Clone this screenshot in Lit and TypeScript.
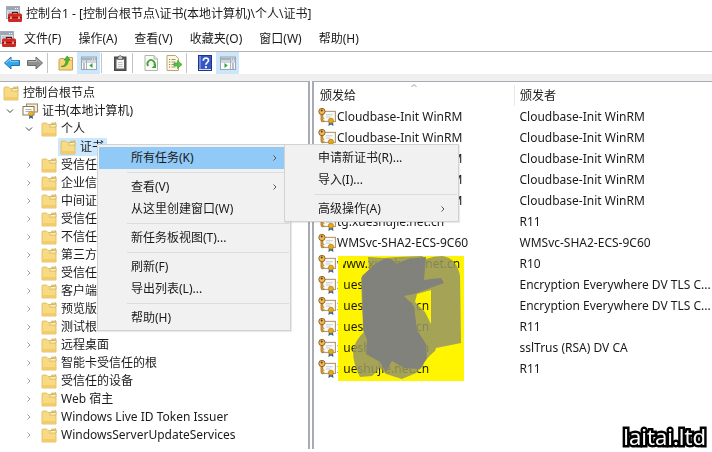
import { LitElement, html, css, svg, nothing } from "lit";
import { customElement, property } from "lit/decorators.js";

interface TreeNode {
  label: string;
  depth: number;
  icon?: string;
  arrow?: "open" | "closed";
  selected?: boolean;
}

interface MenuEntry {
  label?: string;
  sub?: boolean;
  active?: boolean;
}

const TREE: TreeNode[] = [
  { label: "控制台根节点", depth: 0 },
  { label: "证书(本地计算机)", depth: 1, arrow: "open", icon: "store" },
  { label: "个人", depth: 2, arrow: "open" },
  { label: "证书", depth: 3, selected: true },
  ...[
    "受信任",
    "企业信",
    "中间证",
    "受信任",
    "不信任",
    "第三方",
    "受信任",
    "客户端",
    "预览版",
    "测试根",
    "远程桌面",
    "智能卡受信任的根",
    "受信任的设备",
    "Web 宿主",
    "Windows Live ID Token Issuer",
    "WindowsServerUpdateServices",
  ].map((label): TreeNode => ({ label, depth: 2, arrow: "closed" })),
];

const CLOUD = "Cloudbase-Init WinRM";
const SITE = "xueshujie.net.cn";
const CERTS: [string, string][] = [
  [CLOUD, CLOUD],
  [CLOUD, CLOUD],
  [CLOUD, CLOUD],
  [CLOUD, CLOUD],
  [CLOUD, CLOUD],
  ["tg." + SITE, "R11"],
  ["WMSvc-SHA2-ECS-9C60", "WMSvc-SHA2-ECS-9C60"],
  ["www." + SITE, "R10"],
  [SITE, "Encryption Everywhere DV TLS C..."],
  [SITE, "Encryption Everywhere DV TLS C..."],
  [SITE, "R11"],
  [SITE, "sslTrus (RSA) DV CA"],
  [SITE, "R11"],
];

const CONTEXT: MenuEntry[] = [
  { label: "所有任务(K)", sub: true, active: true },
  {},
  { label: "查看(V)", sub: true },
  { label: "从这里创建窗口(W)" },
  {},
  { label: "新任务板视图(T)..." },
  {},
  { label: "刷新(F)" },
  { label: "导出列表(L)..." },
  {},
  { label: "帮助(H)" },
];

const TASKS: MenuEntry[] = [
  { label: "申请新证书(R)..." },
  { label: "导入(I)..." },
  {},
  { label: "高级操作(A)", sub: true },
];

const ICONS: Record<string, unknown> = {
  console: svg`
    <rect x="0.5" y="0.5" width="13" height="12" fill="#d9dfe6" stroke="#a3acb8"/>
    <rect x="1" y="1" width="12" height="3" fill="#9aa6b4"/>
    <path d="M9 2.5h1M11 2.5h1" stroke="#fff"/>
    <path d="M2 6h4M2 8h3" stroke="#a9b3bf"/>
    <path d="M6.5 8V6.3h5V8" fill="none" stroke="#5d1410" stroke-width="1.2"/>
    <rect x="2" y="7.500" width="14" height="8.500" rx="1.500" fill="#cf2a22"/>
    <path d="M2 11.500h14" stroke="#8e1612"/>
    <path d="M5 10.500v2.500M13 10.500v2.500" stroke="#f1e9e4" stroke-width="1.300"/>`,
  folder: svg`
    <path d="M1 3.500L1.500 2h4l1.500 1.500h8V15H1z" fill="#f8da83" stroke="#d9b75c" stroke-width="0.800"/>
    <path d="M8.500 5.500L10 3.500h3l1-1.700h1V6H8.500z" fill="#fdf2c4" stroke="#cfae58" stroke-width="0.700"/>
    <path d="M10.500 2h4v1.500h-4z" fill="#f0d080" stroke="#c9a750" stroke-width="0.600"/>
    <path d="M1.500 12h13v2.600h-13z" fill="#f3cb68"/>`,
  store: svg`
    <rect x="4.500" y="1" width="11" height="8" fill="#f3ede2" stroke="#a08860"/>
    <rect x="1" y="3.500" width="11" height="8.500" fill="#fff" stroke="#8d744e"/>
    <path d="M3.500 6.500h6M3.500 8.500h4" stroke="#9fb0d0"/>
    <path d="M7.500 11l-.5 5 2-1.300 2 1.300-.5-5z" fill="#2e5f9e"/>
    <circle cx="9" cy="10.500" r="2.400" fill="#eab52e" stroke="#b27d10" stroke-width="0.600"/>`,
  cert: svg`
    <rect x="3.500" y="3" width="12" height="9" fill="#fbfaf5" stroke="#b39a78"/>
    <path d="M7 6h6M7 8h4" stroke="#b9c3d4" stroke-width="0.800"/>
    <path d="M9.800 12l-.6 4 2.300-1.300 2.200 1.300-.4-4z" fill="#2f5c9c"/>
    <circle cx="11.500" cy="11.300" r="2.300" fill="#e5a71f" stroke="#ad780f" stroke-width="0.600"/>
    <path d="M2.600 5v6.200l1.400 1.300 1.300-1.300-1-1 1-1-1-1V5z" fill="#dc9f35" stroke="#8a5a18" stroke-width="0.500"/>
    <circle cx="3.500" cy="3.100" r="2.800" fill="#efb95a" stroke="#8a5a18" stroke-width="0.800"/>
    <circle cx="3.300" cy="2.300" r="0.900" fill="#5c3b10"/>`,
  back: svg`<path d="M0.500 8L7 2v3.500h8.500v5H7V14z" fill="#35a6e8" stroke="#1c73b4"/><path d="M2 7.800L6.300 4v2.300h8" fill="none" stroke="#93d3f7"/>`,
  forward: svg`<path d="M15.500 8L9 2v3.500H0.500v5H9V14z" fill="#909090" stroke="#6b6b6b"/><path d="M1.500 6.500h8V4.200L13.500 8" fill="none" stroke="#b9b9b9"/>`,
  up: svg`
    <path d="M1 5l1-1.500h4L7 5h7.500v10H1z" fill="#f5d67b" stroke="#c9a24a"/>
    <path d="M14.500 5V2.500h-4V5" fill="#fbe8a8" stroke="#c9a24a"/>
    <path d="M3 11.500c3.500-.5 5-3 5-6.500H6l3.200-4L12 5h-1.700c0 4.500-2.500 7.500-7.300 6.500z" fill="#52b82c" stroke="#2f8a18" stroke-width="0.600"/>`,
  paneLeft: svg`
    <rect x="0.500" y="2" width="15" height="12.500" fill="#f8fafb" stroke="#9aa6b2"/>
    <path d="M1 2.500h14v3H1z" fill="#a6b2bf"/><path d="M11 4h1M13 4h1" stroke="#fff"/>
    <path d="M5.500 5v9M1 7h14" stroke="#a6b2bf"/><path d="M2 9h2M2 11h2M2 13h2" stroke="#76869a"/>
    <path d="M11.500 8v5L8.300 10.500z" fill="#35a52c"/>`,
  paneRight: svg`
    <rect x="0.500" y="2" width="15" height="12.500" fill="#f8fafb" stroke="#9aa6b2"/>
    <path d="M1 2.500h14v3H1z" fill="#a6b2bf"/><path d="M11 4h1M13 4h1" stroke="#fff"/>
    <path d="M10.500 5v9M1 7h14" stroke="#a6b2bf"/><path d="M12 9h2M12 11h2M12 13h2" stroke="#76869a"/>
    <path d="M4.500 8v5l3.200-2.500z" fill="#35a52c"/>`,
  clipboard: svg`
    <rect x="2.500" y="2" width="11.500" height="13.500" fill="#5d5d5d" stroke="#474747"/>
    <rect x="4.500" y="4.500" width="7.500" height="9" fill="#f7f7f7"/>
    <path d="M6 1.500h1.200a1 1 0 0 1 2 0h1.300V4.500H6z" fill="#c8c8c8" stroke="#555" stroke-width="0.700"/>
    <path d="M6 7.500h4.500M6 9.500h4.500M6 11.500h4.500" stroke="#c4c4c4"/>`,
  refresh: svg`
    <path d="M2 .5h9L14.500 4v11.500H2z" fill="#fbfbf8" stroke="#b4b4aa"/><path d="M11 .5V4h3.500" fill="none" stroke="#b4b4aa"/>
    <path d="M5.300 11A3.600 3.600 0 1 1 11.300 10.200" fill="none" stroke="#3aa935" stroke-width="1.800"/>
    <path d="M13 8.500v4.500H8.500z" fill="#3aa935"/>`,
  exportList: svg`
    <path d="M1 .5h8.500L12.500 3.500v12H1z" fill="#fdf8e2" stroke="#b5a77a"/>
    <path d="M3 4.500h1.200M3 7h1.200M3 9.500h1.200M3 12h1.200" stroke="#b36b3c" stroke-width="1.200"/>
    <path d="M5.500 4.500h4M5.500 7h4M5.500 9.500h3M5.500 12h4" stroke="#98947f"/>
    <path d="M8 8h3.500V5.500L16 9.500l-4.500 4V11H8z" fill="#54c23f" stroke="#38932a" stroke-width="0.600"/>`,
  help: svg`
    <rect x="1.500" y="0.500" width="13" height="15" fill="#3557c6" stroke="#1e3685"/>
    <path d="M3 1v14" stroke="#a9b9ec"/><path d="M2 14.500h12" stroke="#d7dcef"/>
    <path d="M6.300 5.700C6.300 2 11.800 2.200 11.500 5.500 11.300 7.400 8.900 7.300 8.900 9.800" fill="none" stroke="#fff" stroke-width="1.700"/>
    <circle cx="8.900" cy="12.200" r="1.100" fill="#fff"/>`,
};

const CHEVRONS: Record<string, string> = {
  open: "M1 2.5l3 3 3-3",
  closed: "M2.5 1.500l2.500 2.500-2.500 2.500",
  up: "M1.500 5l2.500-2.500 2.500 2.500",
};

@customElement("mmc-icon")
export class MmcIcon extends LitElement {
  @property() name = "folder";
  static styles = css`
    :host { display: block; flex: none; width: 16px; height: 16px; }
    svg { display: block; width: 100%; height: 100%; }
  `;
  render() {
    return html`<svg viewBox="0 0 16 16" aria-hidden="true">${ICONS[this.name]}</svg>`;
  }
}

@customElement("mmc-chevron")
export class MmcChevron extends LitElement {
  @property() dir = "closed";
  static styles = css`
    :host { display: block; flex: none; width: 8px; height: 8px; }
    svg { display: block; }
    path { fill: none; stroke: currentColor; stroke-width: 1; }
  `;
  render() {
    return html`<svg width="8" height="8" viewBox="0 0 8 8" aria-hidden="true"><path d=${CHEVRONS[this.dir]}></path></svg>`;
  }
}

@customElement("mmc-menu")
export class MmcMenu extends LitElement {
  @property({ attribute: false }) entries: MenuEntry[] = [];
  static styles = css`
    :host {
      display: block;
      box-sizing: border-box;
      padding: 2px 1px 1px;
      border: 1px solid #d2d2d2;
      background: #f1f1f1;
      box-shadow: 1px 1px 1px #00000014;
    }
    button {
      display: flex;
      align-items: center;
      justify-content: space-between;
      width: 100%;
      height: 22px;
      padding: 0 10px 0 32px;
      border: 0;
      background: none;
      color: #1a1a1a;
      font: inherit;
      white-space: nowrap;
    }
    .active { background: #91c9f7; }
    mmc-chevron { color: #555; }
    hr {
      height: 1px;
      margin: 3px 0 3px 28px;
      border: 0;
      background: #dcdcdc;
    }
  `;
  render() {
    return this.entries.map((e) =>
      e.label
        ? html`<button role="menuitem" class=${e.active ? "active" : ""}>
            <span>${e.label}</span>${e.sub ? html`<mmc-chevron></mmc-chevron>` : nothing}
          </button>`
        : html`<hr />`
    );
  }
}

@customElement("app-root")
export class AppRoot extends LitElement {
  static styles = css`
    :host {
      position: relative;
      display: flex;
      flex-direction: column;
      min-height: 100vh;
      overflow: hidden;
      background: #fff;
      color: #1a1a1a;
      font: 12px/18px "Noto Sans", "Noto Sans CJK SC", sans-serif;
    }
    header {
      display: flex;
      align-items: center;
      gap: 4px;
      height: 27px;
      padding: 0 6px;
    }
    .menubar {
      display: flex;
      align-items: center;
      height: 24px;
      border-bottom: 1px solid #b4b4b4;
    }
    .menubar button {
      margin-left: 8px;
      padding: 0 9px 0 0;
      border: 0;
      background: none;
      color: inherit;
      font: inherit;
    }
    .toolbar {
      display: flex;
      align-items: center;
      height: 22px;
    }
    .toolbar button {
      display: grid;
      place-items: center;
      width: 23px;
      height: 22px;
      padding: 0;
      border: 0;
      background: none;
    }
    .toolbar .on { background: #cde6f9; }
    .toolbar i {
      width: 1px;
      height: 20px;
      margin: 0 6px 0 1px;
      background: #c4c4c4;
    }
    .panes {
      display: flex;
      flex: 1;
      border-top: 7px solid #f0f0f0;
      padding-bottom: 3px;
    }
    .tree {
      box-sizing: border-box;
      flex: 0 0 310px;
      padding-top: 2px;
      margin-right: 2px;
      border: solid #a8abb3;
      border-width: 1px 2px 0 0;
    }
    .tree ul { margin: 0; padding: 0; list-style: none; }
    .node {
      display: flex;
      align-items: center;
      height: 18px;
      white-space: nowrap;
    }
    .d0 { padding-left: 3px; }
    .d1 { padding-left: 6px; }
    .d2 { padding-left: 25px; }
    .d3 { padding-left: 58px; }
    .node mmc-chevron { margin-right: 8px; color: #a0a0a0; }
    .node .open { color: #444; }
    .label { display: flex; align-items: center; gap: 4px; padding-right: 3px; }
    .picked { padding-left: 2px; background: #cce8ff; }
    .list {
      position: relative;
      flex: 1;
      min-width: 0;
      padding-top: 3px;
      border: solid #a8abb3;
      border-width: 1px 0 0 2px;
    }
    table { width: 100%; border-collapse: collapse; table-layout: fixed; }
    th, td {
      height: 21px;
      padding: 0 0 0 4px;
      font-weight: normal;
      text-align: left;
      white-space: nowrap;
    }
    th { padding-left: 6px; }
    th:first-child { width: 194px; border-right: 1px solid #e8e8e8; }
    th + th, td + td { padding-left: 5px; }
    .cell { display: flex; align-items: center; gap: 1px; }
    .cell mmc-icon { width: 18px; height: 18px; }
    .sort { position: absolute; top: 0; left: 96px; color: #999; }
    .mark {
      position: absolute;
      top: 174px;
      left: 24px;
      width: 126px;
      height: 125px;
    }
    .ink { mix-blend-mode: multiply; }
    .context { position: absolute; top: 144px; left: 97px; width: 194px; }
    .tasks { position: absolute; top: 144px; left: 284px; width: 175px; }
    .brand {
      position: absolute;
      right: 6px;
      bottom: 4px;
      color: #fff;
      font-size: 22px;
      line-height: 24px;
      -webkit-text-stroke: 5px #000;
      paint-order: stroke fill;
    }
  `;

  private tool(name: string, label: string, on = false) {
    return html`<button class=${on ? "on" : ""} aria-label=${label}><mmc-icon name=${name}></mmc-icon></button>`;
  }

  private node(n: TreeNode) {
    return html`<li class="node d${n.depth}">
      ${n.arrow ? html`<mmc-chevron class=${n.arrow} dir=${n.arrow}></mmc-chevron>` : nothing}
      <span class="label ${n.selected ? "picked" : ""}"><mmc-icon name=${n.icon ?? "folder"}></mmc-icon>${n.label}</span>
    </li>`;
  }

  render() {
    return html`
      <header><mmc-icon name="console"></mmc-icon><span>控制台1 - [控制台根节点\\证书(本地计算机)\\个人\\证书]</span></header>
      <nav class="menubar">
        <mmc-icon name="console"></mmc-icon>
        ${["文件(F)", "操作(A)", "查看(V)", "收藏夹(O)", "窗口(W)", "帮助(H)"].map((m) => html`<button>${m}</button>`)}
      </nav>
      <div class="toolbar">
        ${this.tool("back", "后退")}${this.tool("forward", "前进")}<i></i>
        ${this.tool("up", "向上")}${this.tool("paneLeft", "控制台树", true)}<i></i>
        ${this.tool("clipboard", "剪贴板")}<i></i>
        ${this.tool("refresh", "刷新")}${this.tool("exportList", "导出列表")}<i></i>
        ${this.tool("help", "帮助")}${this.tool("paneRight", "操作窗格", true)}
      </div>
      <main class="panes">
        <section class="tree"><ul>${TREE.map((n) => this.node(n))}</ul></section>
        <section class="list">
          <mmc-chevron class="sort" dir="up"></mmc-chevron>
          <table>
            <thead><tr><th>颁发给</th><th>颁发者</th></tr></thead>
            <tbody>
              ${CERTS.map(
                ([to, by]) => html`<tr><td><span class="cell"><mmc-icon name="cert"></mmc-icon>${to}</span></td><td>${by}</td></tr>`
              )}
            </tbody>
          </table>
          <svg class="mark ink" viewBox="0 0 126 125" aria-hidden="true"><path d="M0 0h126v125H0z" fill="#fff500"></path></svg>
          <svg class="mark" viewBox="0 0 126 125" aria-hidden="true">
            <path d="M0 0h5v125H0z" fill="#fff500"></path>
            <path d="M30 1L46 2 60 1 84 0 88 3Q96 0 104 0 119 2 122 20L123 87 98 92 97 95Q86 104 85 110L78 117 64 123 48 118 42 112 34 120 22 121Q15 108 15 95 17 84 26 76L24 50 23 22 31 14zM79 38L93 34V68L87 56 77 46z" fill="#969664" fill-rule="evenodd" opacity="0.86"></path>
            <path d="M37 8L46 3Q54 1 58 8L70 3 88 1 86 24 93 23 103 22 106 27 92 32 76 38 66 40 76 50 79 74 88 88 89 102 82 113 66 112 54 105 48 116 42 106 28 98 29 84 25 74 24 20z" fill="#808080" opacity="0.94"></path>
          </svg>
        </section>
      </main>
      <mmc-menu class="context" role="menu" .entries=${CONTEXT}></mmc-menu>
      <mmc-menu class="tasks" role="menu" .entries=${TASKS}></mmc-menu>
      <div class="brand">laitai.ltd</div>
    `;
  }
}
